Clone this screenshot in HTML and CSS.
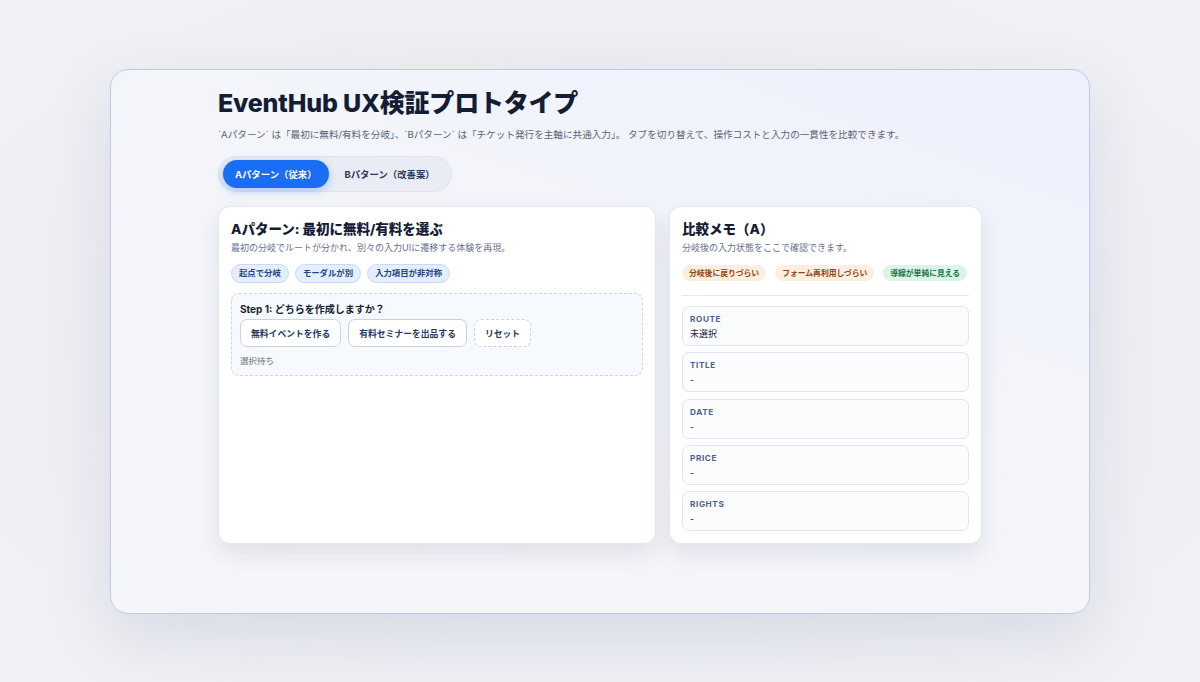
FILE: index.html
```html
<!DOCTYPE html>
<html lang="ja">
<head>
  <meta charset="UTF-8" />
  <meta name="viewport" content="width=device-width, initial-scale=1" />
  <title>EventHub UX検証プロトタイプ</title>
  <link rel="stylesheet" href="styles.css">
</head>
<body>
  <div class="frame">
    <main class="wrap">
      <h1 class="page-title">EventHub UX検証プロトタイプ</h1>
      <p class="page-lead">`Aパターン` は「最初に無料/有料を分岐」、`Bパターン` は「チケット発行を主軸に共通入力」。 タブを切り替えて、操作コストと入力の一貫性を比較できます。</p>

      <div class="tabs">
        <button class="tab is-active">Aパターン（従来）</button>
        <button class="tab">Bパターン（改善案）</button>
      </div>

      <div class="panels">
        <!-- flow panel -->
        <section class="card">
          <h2 class="card-title">Aパターン: 最初に無料/有料を選ぶ</h2>
          <p class="card-lead">最初の分岐でルートが分かれ、別々の入力UIに遷移する体験を再現。</p>
          <div class="chips">
            <span class="chip">起点で分岐</span>
            <span class="chip">モーダルが別</span>
            <span class="chip">入力項目が非対称</span>
          </div>

          <div class="step">
            <div class="step-title">Step 1: どちらを作成しますか？</div>
            <div class="step-actions">
              <button class="btn">無料イベントを作る</button>
              <button class="btn">有料セミナーを出品する</button>
              <button class="btn btn-ghost">リセット</button>
            </div>
            <div class="step-status">選択待ち</div>
          </div>
        </section>

        <!-- memo panel -->
        <aside class="card">
          <h2 class="card-title">比較メモ（A）</h2>
          <p class="card-lead">分岐後の入力状態をここで確認できます。</p>
          <div class="chips chips-loose">
            <span class="chip chip-warn">分岐後に戻りづらい</span>
            <span class="chip chip-warn">フォーム再利用しづらい</span>
            <span class="chip chip-ok">導線が単純に見える</span>
          </div>
          <hr class="divider">
          <div class="fields">
            <div class="field"><div class="field-label">Route</div><div class="field-value">未選択</div></div>
            <div class="field"><div class="field-label">Title</div><div class="field-value">-</div></div>
            <div class="field"><div class="field-label">Date</div><div class="field-value">-</div></div>
            <div class="field"><div class="field-label">Price</div><div class="field-value">-</div></div>
            <div class="field"><div class="field-label">Rights</div><div class="field-value">-</div></div>
          </div>
        </aside>
      </div>
    </main>
  </div>
</body>
</html>
```

FILE: styles.css
```css
* {
  box-sizing: border-box;
}

body {
  margin: 0;
  min-height: 100vh;
  background: radial-gradient(ellipse at 50% 50%, #e4e7f0 0%, #eceef3 55%, #f1f2f5 100%);
  font-family: Inter, "Noto Sans CJK JP", sans-serif;
  color: #16213a;
  padding: 69px 110px;
}

.frame {
  height: 545px;
  border: 1px solid #c1c7ef;
  border-radius: 18px;
  background: linear-gradient(200deg, #edf1fd 0%, #f3f5fa 40%, #f5f6f9 100%);
  box-shadow: 0 24px 60px rgba(120, 130, 170, 0.18);
  padding-top: 17px;
}

.wrap {
  width: 764px;
  margin: 0 auto;
}

.page-title {
  margin: 0;
  font-size: 25px;
  font-weight: 800;
  line-height: 32px;
  letter-spacing: -0.2px;
  color: #141d33;
}

.page-lead {
  margin: 8px 0 0;
  font-size: 9.6px;
  line-height: 15px;
  color: #5a6478;
}

.tabs {
  display: inline-flex;
  gap: 4px;
  margin-top: 14px;
  padding: 3px 4px;
  border: 1px solid #dfe3ee;
  border-radius: 999px;
  background: #e9ecf4;
}

.tab {
  border: 0;
  background: transparent;
  font-family: inherit;
  font-size: 9.4px;
  font-weight: 700;
  color: #28385a;
  height: 28px;
  padding: 0 12px;
  border-radius: 999px;
}

.tab.is-active {
  background: #1a6ef5;
  color: #fff;
  box-shadow: 0 3px 8px rgba(26, 110, 245, 0.3);
}

.panels {
  display: grid;
  grid-template-columns: 438px 1fr;
  gap: 13px;
  margin-top: 14px;
}

.card {
  background: #fff;
  border: 1px solid #e3e7ef;
  border-radius: 12px;
  padding: 13px 12px 12px;
  box-shadow: 0 10px 22px rgba(40, 50, 80, 0.1);
  min-height: 337px;
}

.card-title {
  margin: 0;
  font-size: 13.5px;
  font-weight: 800;
  line-height: 18px;
  color: #141d33;
}

.card-lead {
  margin: 3px 0 0;
  font-size: 9px;
  line-height: 13px;
  color: #66708a;
}

.chips {
  display: flex;
  gap: 6px;
  margin-top: 10px;
}

.chips-loose {
  gap: 9px;
  margin-top: 11px;
}

.chip {
  display: inline-block;
  white-space: nowrap;
  padding: 0 7px;
  height: 19px;
  line-height: 17px;
  font-size: 8.4px;
  font-weight: 700;
  border-radius: 999px;
  background: #e4eefd;
  border: 1px solid #c8daf6;
  color: #25467f;
}

.chip-warn {
  background: #fdefdf;
  border-color: #fdefdf;
  color: #8e4512;
  height: 16px;
  line-height: 14px;
  padding: 0 6px;
  font-size: 7.8px;
}

.chip-ok {
  background: #dcf3e8;
  border-color: #dcf3e8;
  color: #1c744a;
  height: 16px;
  line-height: 14px;
  padding: 0 6px;
  font-size: 7.8px;
}

.step {
  margin-top: 10px;
  padding: 8px 8px 8px;
  border: 1px dashed #cdd6e4;
  border-radius: 8px;
  background: #f6f9fd;
}

.step-title {
  font-size: 10px;
  font-weight: 700;
  line-height: 14px;
  color: #141d33;
}

.step-actions {
  display: flex;
  gap: 7px;
  margin-top: 3px;
}

.btn {
  height: 28px;
  padding: 0 10px;
  font-family: inherit;
  font-size: 8.8px;
  font-weight: 700;
  color: #28385a;
  background: #fff;
  border: 1px solid #c9d2e0;
  border-radius: 7px;
}

.btn-ghost {
  border-style: dashed;
}

.step-status {
  margin-top: 8px;
  font-size: 8.5px;
  line-height: 12px;
  color: #6b7486;
}

.divider {
  margin: 14px 0 10px;
  border: 0;
  border-top: 1px solid #e4e7ee;
}

.fields {
  display: flex;
  flex-direction: column;
  gap: 6.3px;
}

.field {
  height: 40px;
  padding: 6px 7px;
  border: 1px solid #e1e5ed;
  border-radius: 7px;
  background: #fbfcfe;
}

.field-label {
  font-size: 8.2px;
  font-weight: 700;
  line-height: 12px;
  letter-spacing: 0.6px;
  text-transform: uppercase;
  color: #4b6189;
}

.field-value {
  margin-top: 2px;
  font-size: 9px;
  line-height: 13px;
  color: #1c2540;
}
```
